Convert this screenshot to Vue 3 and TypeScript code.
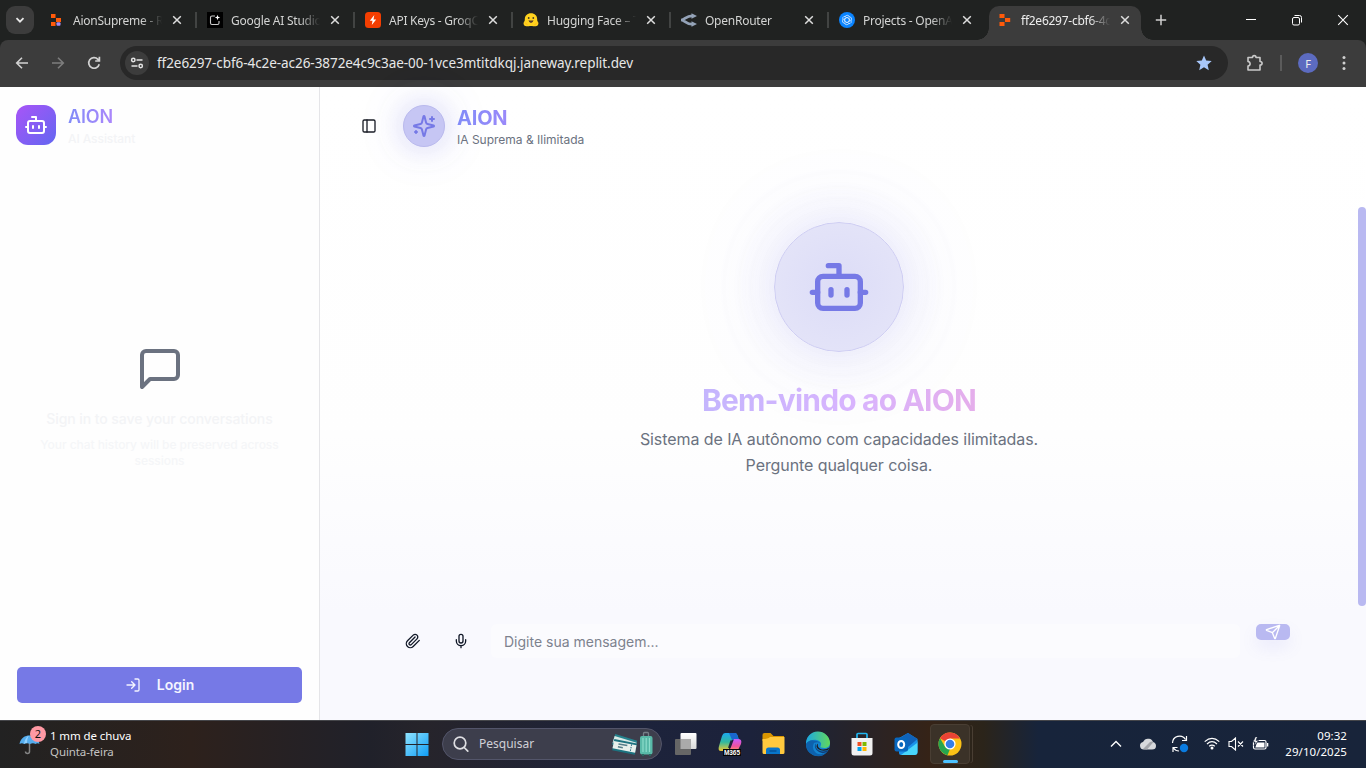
<script setup lang="ts">
interface Tab {
  title: string
  icon: string
  active?: boolean
}

const tabs: Tab[] = [
  { title: 'AionSupreme - R', icon: 'replit-dev' },
  { title: 'Google AI Studio', icon: 'studio' },
  { title: 'API Keys - GroqC', icon: 'groq' },
  { title: 'Hugging Face – T', icon: 'hugging' },
  { title: 'OpenRouter', icon: 'router' },
  { title: 'Projects - OpenA', icon: 'openai' },
  { title: 'ff2e6297-cbf6-4c', icon: 'replit', active: true },
]
const petals: number[] = [0, 60, 120, 180, 240, 300]
</script>

<template>
  <div class="screen">
    <header class="tabstrip">
      <button class="tab-search"><svg width="10" height="10" viewBox="0 0 10 10"><path d="M1.5 3.2 5 6.7l3.500-3.500" fill="none" stroke="#e8e8e8" stroke-width="1.8" /></svg></button>
      <nav class="tabs">
        <div v-for="(tab, i) in tabs" :key="tab.title" class="tab" :class="{ active: tab.active, divided: i > 0 && !tab.active }">
          <svg class="favicon" width="16" height="16" viewBox="0 0 16 16">
            <g v-if="tab.icon === 'replit-dev'">
              <path fill="#ff5a0a" d="M2 2h4.500v4H2zM7 6h5v4H7zM2 10h4.500v4H2z" />
              <rect x="7.500" y="10.200" width="4" height="3.600" rx="1" fill="#a08cf5" />
            </g>
            <g v-else-if="tab.icon === 'studio'">
              <rect width="16" height="16" fill="#000" />
              <path d="M8 4H5Q3.500 4 3.500 5.500V11Q3.500 12.500 5 12.500H10.500Q12 12.500 12 11V9" fill="none" stroke="#ccc" stroke-width="1.1" />
              <path d="M10.500 2.800 11.200 4.800 13.200 5.500 11.200 6.200 10.500 8.200 9.800 6.200 7.800 5.500 9.800 4.800Z" fill="#fff" />
            </g>
            <g v-else-if="tab.icon === 'groq'">
              <rect width="16" height="16" rx="3.500" fill="#f43e01" />
              <path d="M9.300 3 4.800 8.700H7.500L6.800 13 11.200 7.400H8.500Z" fill="#fff" />
            </g>
            <g v-else-if="tab.icon === 'hugging'">
              <path d="M8 1.200c3.700 0 6.200 2.500 6.200 6 0 1.200.1 1.800.8 2.800 1 1.400.3 4-2.300 4.300-1.500.2-2.700-.3-4.700-.3s-3.200.5-4.700.3C.7 14 0 11.400 1 10c.7-1 .8-1.600.8-2.800 0-3.500 2.500-6 6.200-6z" fill="#ffd21e" />
              <path d="M2 10.500 4.500 13M14 10.500 11.500 13" stroke="#ffb01e" stroke-width="1" fill="none" />
              <circle cx="5.700" cy="6" r=".9" fill="#463b2a" /><circle cx="10.300" cy="6" r=".9" fill="#463b2a" />
              <path d="M5.500 8.200Q8 9 10.500 8.200 10 11 8 11T5.500 8.200Z" fill="#5b3b2c" />
            </g>
            <g v-else-if="tab.icon === 'router'">
              <path d="M0 8C4 8 5 3.800 11 3.800M0 8C4 8 5 12.200 11 12.200" fill="none" stroke="#94a3b8" stroke-width="2.700" />
              <path d="M10.500 1.200 16 4 10.500 6.800ZM10.500 9.200 16 12 10.500 14.800Z" fill="#94a3b8" />
            </g>
            <g v-else-if="tab.icon === 'openai'">
              <circle cx="8" cy="8" r="8" fill="#0a84ff" />
              <g fill="none" stroke="#d4eaff" stroke-width=".75">
                <path v-for="a in petals" :key="a" d="M8 5.400 10.300 6.700V9.500M5.800 4.600 8 3.200Q10 3 10.300 5.200" :transform="`rotate(${a} 8 8)`" />
              </g>
            </g>
            <path v-else fill="#ff5a0a" d="M2.500 2h5v4h-5zM8 6h5.200v4H8zM2.500 10h5v4h-5z" />
          </svg>
          <span class="tab-title">{{ tab.title }}</span>
          <svg class="tab-close" width="10" height="10" viewBox="0 0 10 10"><path d="m1.200 1.200 7.600 7.600m0-7.600L1.200 8.800" stroke="#dedede" stroke-width="1.500" /></svg>
        </div>
      </nav>
      <svg class="new-tab" width="12" height="12" viewBox="0 0 12 12"><path d="M6 .8v10.400M.8 6h10.400" stroke="#d0d0d0" stroke-width="1.500" /></svg>
      <div class="window-controls">
        <svg width="12" height="12" viewBox="0 0 12 12"><path d="M1 5.500h10" stroke="#fff" /></svg>
        <svg width="12" height="12" viewBox="0 0 12 12" fill="none" stroke="#fff"><rect x="1.500" y="3.500" width="7" height="7.500" rx="1.500" /><path d="M3.500 1.500H8.500Q10.500 1.500 10.500 3.500V8.500" /></svg>
        <svg width="12" height="12" viewBox="0 0 12 12"><path d="m1.200 1.200 9.600 9.600m0-9.600-9.600 9.600" stroke="#fff" stroke-width="1.100" /></svg>
      </div>
    </header>

    <div class="toolbar">
      <div class="nav-icons">
        <svg width="16" height="16" viewBox="0 0 16 16" fill="none" stroke="#d2d2d2" stroke-width="1.600"><path d="M14 8H3M8 2.700 2.700 8 8 13.300" /></svg>
        <svg width="16" height="16" viewBox="0 0 16 16" fill="none" stroke="#7d7d7d" stroke-width="1.600"><path d="M2 8h11M8 2.700 13.300 8 8 13.300" /></svg>
        <svg width="16" height="16" viewBox="0 0 16 16" fill="none" stroke="#d2d2d2" stroke-width="1.700"><path d="M13.200 9.200A5.300 5.300 0 1 1 11.900 4.300L13.300 5.900M13.400 1.800V6H9.200" /></svg>
      </div>
      <div class="omnibox">
        <span class="site-info"><svg width="14" height="14" viewBox="0 0 14 14" fill="none" stroke="#e4e4e4" stroke-width="1.500"><circle cx="3.300" cy="4" r="1.700" /><path d="M6.500 4h6M1.500 10h6" /><circle cx="10.700" cy="10" r="1.700" /></svg></span>
        <span class="url">ff2e6297-cbf6-4c2e-ac26-3872e4c9c3ae-00-1vce3mtitdkqj.janeway.replit.dev</span>
        <svg class="star" width="16" height="16" viewBox="0 0 16 16"><path d="M8 .5 10.200 5.500 15.700 6.100 11.600 9.700 12.800 15.200 8 12.300 3.200 15.200 4.400 9.700.3 6.100 5.800 5.500Z" fill="#a8c7fa" /></svg>
      </div>
      <svg class="puzzle" width="18" height="18" viewBox="0 0 18 18"><path d="M2 3.500H6.500C6.500 1 10 1 10 3.500H14V7.500C16.800 7.500 16.800 11 14 11V16H2V12C4.800 11.500 4.800 8 2 7.500Z" fill="none" stroke="#c9c9c9" stroke-width="1.600" stroke-linejoin="round" /></svg>
      <i class="tool-sep"></i>
      <span class="avatar">F</span>
      <svg class="kebab" width="4" height="16" viewBox="0 0 4 16" fill="#d0d0d0"><circle cx="2" cy="2.500" r="1.500" /><circle cx="2" cy="8" r="1.500" /><circle cx="2" cy="13.500" r="1.500" /></svg>
    </div>

    <div class="page">
      <aside class="sidebar">
        <div class="brand">
          <span class="brand-logo">
            <svg class="line" width="24" height="24" viewBox="0 0 24 24"><path d="M12 8V4H8M2 14h2M20 14h2M15 13v2M9 13v2" /><rect width="16" height="12" x="4" y="8" rx="2" /></svg>
          </span>
          <div>
            <div class="brand-name">AION</div>
            <div class="brand-sub">AI Assistant</div>
          </div>
        </div>
        <div class="empty">
          <svg class="line" width="48" height="48" viewBox="0 0 24 24"><path d="M21 15a2 2 0 0 1-2 2H7l-4 4V5a2 2 0 0 1 2-2h14a2 2 0 0 1 2 2z" /></svg>
          <p class="empty-title">Sign in to save your conversations</p>
          <p class="empty-sub">Your chat history will be preserved across sessions</p>
        </div>
        <button class="login">
          <svg class="line" width="16" height="16" viewBox="0 0 24 24"><path d="M15 3h4a2 2 0 0 1 2 2v14a2 2 0 0 1-2 2h-4M10 17l5-5-5-5M15 12H3" /></svg>
          <span>Login</span>
        </button>
      </aside>

      <main class="main">
        <div class="chat-head">
          <svg class="line panel-icon" width="16" height="16" viewBox="0 0 24 24"><rect width="18" height="18" x="3" y="3" rx="2" /><path d="M9 3v18" /></svg>
          <span class="spark">
            <svg class="line" width="24" height="24" viewBox="0 0 24 24"><path d="M9.937 15.500A2 2 0 0 0 8.500 14.063l-6.135-1.582a.5.5 0 0 1 0-.962L8.500 9.936A2 2 0 0 0 9.937 8.500l1.582-6.135a.5.5 0 0 1 .963 0L14.063 8.500A2 2 0 0 0 15.500 9.937l6.135 1.581a.5.5 0 0 1 0 .964L15.500 14.063a2 2 0 0 0-1.437 1.437l-1.582 6.135a.5.5 0 0 1-.963 0zM20 3v4M22 5h-4M4 17v2M5 18H3" /></svg>
          </span>
          <div>
            <div class="chat-name">AION</div>
            <div class="chat-sub">IA Suprema &amp; Ilimitada</div>
          </div>
        </div>
        <section class="hero">
          <span class="orb">
            <svg class="line" width="64" height="64" viewBox="0 0 24 24"><path d="M12 8V4H8M2 14h2M20 14h2M15 13v2M9 13v2" /><rect width="16" height="12" x="4" y="8" rx="2" /></svg>
          </span>
          <h1>Bem-vindo ao AION</h1>
          <p>Sistema de IA autônomo com capacidades ilimitadas.<br />Pergunte qualquer coisa.</p>
        </section>
        <div class="composer">
          <svg class="line" width="16" height="16" viewBox="0 0 24 24"><path d="m21.440 11.050-9.190 9.190a6 6 0 0 1-8.490-8.490l8.570-8.570A4 4 0 1 1 18 8.840l-8.590 8.570a2 2 0 0 1-2.830-2.830l8.490-8.480" /></svg>
          <svg class="line" width="16" height="16" viewBox="0 0 24 24"><path d="M12 2a3 3 0 0 0-3 3v7a3 3 0 0 0 6 0V5a3 3 0 0 0-3-3ZM19 10v2a7 7 0 0 1-14 0v-2M12 19v3" /></svg>
          <div class="field">Digite sua mensagem...</div>
          <button class="send">
            <svg class="line" width="16" height="16" viewBox="0 0 24 24"><path d="M14.536 21.686a.5.5 0 0 0 .937-.024l6.500-19a.496.496 0 0 0-.635-.635l-19 6.500a.5.5 0 0 0-.024.937l7.930 3.180a2 2 0 0 1 1.112 1.110zM21.854 2.147l-10.940 10.939" /></svg>
          </button>
        </div>
        <i class="scroll-thumb"></i>
      </main>
    </div>

    <footer class="taskbar">
      <div class="weather">
        <div class="umbrella">
          <svg width="22" height="22" viewBox="0 0 22 22"><path d="M10.500 10v8.500a2 2 0 0 1-4 0" fill="none" stroke="#858585" stroke-width="1.500" /><path d="M.5 11C1.500 5 6 2.500 10.500 2.500S19.500 5 20.500 11Q18.500 9.300 16.500 11 14 9.300 11 11 8 9.300 5 11 3 9.300.5 11Z" fill="#55adee" /><path d="M5 11Q6 4 10.500 2.500 8 4 8 10.200 6.300 9.800 5 11Z" fill="#92d2ff" /></svg>
          <span class="badge">2</span>
        </div>
        <div class="weather-text"><div>1 mm de chuva</div><div class="muted">Quinta-feira</div></div>
      </div>

      <div class="dock">
        <svg class="win" width="24" height="24" viewBox="0 0 24 24">
          <defs><linearGradient id="win" x1="0" y1="0" x2="1" y2="1"><stop stop-color="#8fe3ff" /><stop offset="1" stop-color="#0f9df5" /></linearGradient></defs>
          <path d="M.5 1h11v11H.5zM12.500 1h11v11h-11zM.5 13h11v11H.5zM12.500 13h11v11h-11z" fill="url(#win)" />
        </svg>
        <div class="search">
          <svg width="18" height="18" viewBox="0 0 18 18" fill="none" stroke="#dedee2" stroke-width="1.700"><circle cx="8" cy="8" r="5.800" /><path d="m12.200 12.500 3.600 3.600" stroke-linecap="round" /></svg>
          <span>Pesquisar</span>
          <svg class="travel" width="42" height="26" viewBox="0 0 42 26">
            <g transform="rotate(17 12 12)"><rect x="1" y="6" width="23" height="11" fill="#25828d" /><rect x="1" y="8" width="23" height="7" fill="#d9e9e6" /></g>
            <g transform="rotate(11 12 16)"><rect x="1" y="10" width="23" height="11.500" fill="#1c7380" /><rect x="1" y="12" width="23" height="7.500" fill="#e7f0ec" /><path d="M6 14h9M6 17h5" stroke="#557e89" stroke-width="1.500" /><path d="M19 12v7" stroke="#2c6f82" stroke-dasharray="1.500 1" /></g>
            <path d="M31.500 7V2.500Q31.500 1.500 32.500 1.500H35.500Q36.500 1.500 36.500 2.500V7" stroke="#777f88" stroke-width="1.300" fill="none" />
            <rect x="28" y="5" width="12.500" height="18.500" rx="2" fill="#59b9a8" /><path d="M31 7v14M34.200 7v14M37.500 7v14" stroke="#8bdccb" stroke-width="1.200" /><path d="M30 24h2m5 0h2" stroke="#28665f" stroke-width="2" />
          </svg>
        </div>
        <svg width="28" height="28" viewBox="0 0 28 28"><defs><linearGradient id="tv" x1="0" y1="0" x2="0" y2="1"><stop stop-color="#fff" /><stop offset="1" stop-color="#d9d9d9" /></linearGradient></defs><rect x="8.500" y="3" width="16" height="16" rx="1" fill="url(#tv)" /><rect x="3" y="9" width="16" height="16" rx="1" fill="#666" /><path d="M8.500 9H19V19H8.500z" fill="#aaa" /></svg>
        <svg width="28" height="28" viewBox="0 0 28 28">
          <defs>
            <linearGradient id="ca" x1="0" y1="0" x2="0" y2="1"><stop stop-color="#1ca8ed" /><stop offset=".5" stop-color="#31b9a0" /><stop offset="1" stop-color="#f4c72d" /></linearGradient>
            <linearGradient id="cb" x1="0" y1="0" x2="0" y2="1"><stop stop-color="#c65cff" /><stop offset=".6" stop-color="#ee519c" /><stop offset="1" stop-color="#ff9862" /></linearGradient>
          </defs>
          <path d="M9 3H19Q21 3 22 7L23 10H16L13 19Q12 21 9 21H5Q1.500 21 3 16L6 6Q7 3 9 3Z" fill="url(#ca)" /><path d="M13 3H19Q21 3 22 7L23 10H16Z" fill="#1967cf" /><path d="M18 9H22Q26.500 9 25 14L23 18Q22 21 19 21H12Q14 20 15 17Z" fill="url(#cb)" /><path d="M15.500 10.500 13 18" stroke="#1d223a" stroke-width="2" />
          <rect x="7" y="19" width="18" height="7" fill="#050505" /><text x="8" y="25" font-size="6.500" font-weight="700" fill="#fff" textLength="16" font-family="Liberation Sans, sans-serif">M365</text>
        </svg>
        <svg width="28" height="28" viewBox="0 0 28 28"><path d="M2.500 5Q2.500 3 4.500 3h6l3 3H24v5H2.500z" fill="#d99500" /><path d="M2.500 9Q8 9 10 7H24.500V22.500Q24.500 24 23 24H4Q2.500 24 2.500 22.500Z" fill="#ffc93e" /><path d="M6 24V20Q6 17.500 8.500 17.500H17.500Q20 17.500 20 20V24Z" fill="#0875ca" /><path d="M9.500 21h7" stroke="#064d92" stroke-width="1.300" /></svg>
        <svg width="28" height="28" viewBox="0 0 28 28">
          <defs><linearGradient id="ed" x1="0" y1="0" x2="1" y2="0"><stop stop-color="#1ba7e5" /><stop offset="1" stop-color="#62d95b" /></linearGradient></defs>
          <circle cx="14" cy="14" r="12" fill="#1284d0" /><path d="M2 14A12 12 0 0 1 26 13C26 17 22 19 17 17.500 15.500 17 17.500 15.500 17 13.500 16 9 6 8 2 14Z" fill="url(#ed)" /><path d="M10 13Q7 19 12 23 17 26 23 22A12 12 0 0 1 2 14Q5 9.500 10 10.500 16 11 16.500 14 15 11 10 13Z" fill="#0d61ad" /><path d="M12 13.500Q10.500 18 15 20.500 20 22.500 24 20L23 22Q17 25 12.500 20 9.500 16 12 13.500Z" fill="#103f7b" /><path d="M14 13.500Q13 17 16.500 19 21 20.500 25.500 17.500L24 20Q18 22 14 19 11 16 14 13.500Z" fill="#201d22" />
        </svg>
        <svg width="28" height="28" viewBox="0 0 28 28"><path d="M9 8V4.500Q9 3.500 10 3.500H18Q19 3.500 19 4.500V8" fill="none" stroke="#20b6f0" stroke-width="1.700" /><path d="M3.500 8H24.500V23Q24.500 25.500 22 25.500H6Q3.500 25.500 3.500 23Z" fill="#f1f1f1" /><path fill="#f25022" d="M9.500 12h4v4h-4z" /><path fill="#7fba00" d="M14.500 12h4v4h-4z" /><path fill="#00a4ef" d="M9.500 17h4v4h-4z" /><path fill="#ffb900" d="M14.500 17h4v4h-4z" /></svg>
        <svg width="28" height="28" viewBox="0 0 28 28"><path d="M7 8 16 3 25.500 9V22Q25.500 25 22.500 25H9Q7 25 7 23Z" fill="#1a91e8" /><path d="M8 8 16 3 25.500 9 16 17Z" fill="#1062b9" /><path d="M25.500 10V22Q25.500 25 22.500 25H9L25 13Z" fill="#48d6fb" /><rect x="2.500" y="7.500" width="13.500" height="14" rx="2" fill="#0867be" /><ellipse cx="9.200" cy="14.500" rx="3" ry="3.500" fill="none" stroke="#fff" stroke-width="2" /></svg>
        <div class="chrome-slot">
          <svg width="24" height="24" viewBox="0 0 24 24"><circle cx="12" cy="12" r="11.500" fill="#fbc116" /><path d="M12 12 2 6.200A11.500 11.500 0 0 1 22 6.500H12Z" fill="#ea4335" /><path d="M2 6.200 7.200 15 12 17 9.500 23.200A11.500 11.500 0 0 1 2 6.200Z" fill="#25a650" /><circle cx="12" cy="12" r="5.600" fill="#fff" /><circle cx="12" cy="12" r="4.300" fill="#347ee8" /></svg>
        </div>
      </div>

      <div class="tray">
        <svg width="12" height="12" viewBox="0 0 12 12"><path d="M1 8.500 6 3.500l5 5" fill="none" stroke="#fff" stroke-width="1.400" /></svg>
        <svg class="cloud" width="16" height="12" viewBox="0 0 16 12"><path d="M4 11.500A3.800 3.800 0 0 1 3 4Q5 0 9 .8 12 1 13 4 16 4.800 16 8 16 11.500 12 11.500Z" fill="#d7d9dc" /><path d="M3 11 10 4Q12 3 13.500 4L7 11.500Z" fill="#a3a5aa" /></svg>
        <svg class="sync" width="18" height="18" viewBox="0 0 18 18"><path d="M1.500 8A7 7 0 0 1 14.500 4.500M15.500 1V5.500H11M2 17v-4.500H6.500M2.500 13Q4.500 16 8 16" fill="none" stroke="#fff" stroke-width="1.200" /><circle cx="13" cy="13" r="4.200" fill="#0a7be0" /></svg>
        <svg class="wifi" width="16" height="13" viewBox="0 0 16 13"><path d="M.7 4.600Q8-2 15.300 4.600M3 7Q8 2.400 13 7M5.200 9.300Q8 6.800 10.800 9.300" fill="none" stroke="#fff" stroke-width="1.200" /><circle cx="8" cy="11" r="1.500" fill="#fff" /></svg>
        <svg class="vol" width="16" height="14" viewBox="0 0 16 14"><path d="M1 4.500H3.500L7.500 1V13L3.500 9.500H1ZM10 4.500l5 5m0-5-5 5" fill="none" stroke="#fff" stroke-width="1.100" /></svg>
        <svg class="bat" width="17" height="14" viewBox="0 0 17 14"><rect x="1.500" y="3.500" width="12.500" height="8.500" rx="1.500" fill="none" stroke="#fff" stroke-width="1.200" /><path d="M5 5.500H12.500V10.500H3.300zM15 6h1.300v3.500H15z" fill="#fff" /><path d="M3.500-.5 1 5H3.200L2 9 6.500 3.500H4L5.500-.5Z" fill="#fff" stroke="#18233a" stroke-width=".7" /></svg>
        <div class="clock"><div>09:32</div><div>29/10/2025</div></div>
      </div>
    </footer>
  </div>
</template>

<style>
html, body { margin: 0; overflow: hidden; }
</style>

<style scoped>
* { box-sizing: border-box; }
svg { display: block; flex: none; }
button { border: 0; padding: 0; font: inherit; }
p, h1 { margin: 0; }
.screen { width: 1366px; height: 768px; display: flex; flex-direction: column; overflow: hidden; background: #202221; font-family: Inter, "Noto Sans", sans-serif; }
.line { fill: none; stroke: currentColor; stroke-width: 2; stroke-linecap: round; stroke-linejoin: round; }

.tabstrip { height: 40px; flex: none; display: flex; align-items: center; background: #202221; font-family: "Noto Sans", "Open Sans", sans-serif; }
.tab-search { width: 28px; height: 28px; margin-left: 6px; border-radius: 9px; background: #3c3c3c; display: grid; place-items: center; }
.tabs { display: flex; margin-left: 6px; align-self: stretch; }
.tab { position: relative; width: 158px; height: 40px; display: flex; align-items: center; padding-left: 9px; color: #d3d4d3; font-size: 12px; }
.tab.divided::before { content: ""; position: absolute; left: -3px; top: 12px; width: 2px; height: 16px; background: #424443; }
.tab-title { width: 90px; margin-left: 8px; padding-top: 1px; white-space: nowrap; overflow: hidden; letter-spacing: -0.250px; line-height: 18px; mask-image: linear-gradient(90deg, #000 76%, transparent 99%); }
.tab-close { margin-left: 9px; }
.tab.active { width: 152px; height: 34px; align-self: flex-end; margin-left: 1px; padding: 0 0 6px 8px; border-radius: 10px 10px 0 0; background: #3c3c3c; color: #eee; }
.tab.active::before, .tab.active::after { content: ""; position: absolute; bottom: 0; width: 12px; height: 12px; }
.tab.active::before { left: -12px; background: radial-gradient(circle at 0 0, transparent 11.500px, #3c3c3c 12px); }
.tab.active::after { right: -12px; background: radial-gradient(circle at 100% 0, transparent 11.500px, #3c3c3c 12px); }
.new-tab { margin-left: 14px; }
.window-controls { margin-left: auto; margin-right: 17px; display: flex; gap: 34px; }

.toolbar { height: 47px; flex: none; display: flex; align-items: center; background: #3c3c3c; border-radius: 8px 8px 0 0; padding: 0 0 1px 14px; font-family: "Noto Sans", "Open Sans", sans-serif; }
.nav-icons { display: flex; gap: 20px; }
.omnibox { width: 1108px; height: 34px; margin-left: 18px; padding: 0 16px 0 5px; display: flex; align-items: center; border-radius: 17px; background: #282828; color: #e7e7e7; font-size: 13px; }
.site-info { width: 24px; height: 24px; border-radius: 50%; background: #3c3c3c; display: grid; place-items: center; }
.url { margin-left: 8px; font-size: 13.500px; letter-spacing: -0.060px; }
.star { margin-left: auto; }
.puzzle { margin-left: 18px; }
.tool-sep { width: 2px; height: 16px; margin-left: 16px; background: #5b5b5b; }
.avatar { width: 20px; height: 20px; margin-left: 16px; border-radius: 50%; background: #5c6bc0; color: #eee; font-size: 11px; display: grid; place-items: center; }
.kebab { margin-left: 24px; }

.page { height: 633px; flex: none; display: flex; background: #fff; }
.sidebar { width: 320px; flex: none; display: flex; flex-direction: column; border-right: 1px solid #e5e5e8; background: #fefefe; }
.brand { display: flex; gap: 12px; padding: 18px 16px 0; }
.brand-logo { width: 40px; height: 40px; border-radius: 12px; color: #fff; background: linear-gradient(135deg, #a855f7, #6366f1); display: grid; place-items: center; }
.brand-name { width: 67px; font-size: 18px; line-height: 24px; font-weight: 600; letter-spacing: -0.150px; color: transparent; background: linear-gradient(90deg, #818cf8, #c084fc); background-clip: text; }
.brand-sub { margin-top: 2px; font-size: 12px; line-height: 16px; font-weight: 500; letter-spacing: -0.080px; color: #f3f4f6; }
.empty { flex: 1; display: flex; flex-direction: column; align-items: center; padding-top: 198px; color: #6b7280; text-align: center; }
.empty-title { margin-top: 16px; font-size: 14px; line-height: 20px; font-weight: 500; letter-spacing: -0.080px; color: #f3f4f6; }
.empty-sub { width: 255px; margin-top: 8px; font-size: 12px; line-height: 16px; font-weight: 500; letter-spacing: -0.050px; color: #f5f6f8; }
.login { height: 36px; margin: 0 17px 17px; padding-bottom: 1px; border-radius: 5px; background: #7679e6; color: #f4f4ff; font-size: 14px; font-weight: 600; display: flex; align-items: center; justify-content: center; gap: 16px; }

.main { position: relative; flex: 1; display: flex; flex-direction: column; background: linear-gradient(#fff 0%, #fefefe 55%, #f9f9fe 83%, #f9f9fe 100%); }
.chat-head { height: 78px; display: flex; align-items: center; padding-left: 41px; }
.panel-icon { color: #1b1e27; }
.spark { width: 42px; height: 42px; margin-left: 26px; margin-right: 12px; border: 1px solid #b9b9ed; border-radius: 50%; background: #c6c6f4; color: #7679e6; display: grid; place-items: center; box-shadow: 0 0 30px rgba(118, 121, 230, .3), 0 0 60px rgba(118, 121, 230, .1); }
.chat-name { width: 127px; font-size: 20px; line-height: 28px; font-weight: 700; letter-spacing: -0.200px; color: transparent; background: linear-gradient(90deg, #818cf8, #c084fc); background-clip: text; }
.chat-sub { font-size: 12px; line-height: 16px; color: #6b7280; }
.hero { width: 1038px; display: flex; flex-direction: column; align-items: center; padding-top: 57px; }
.orb { width: 130px; height: 130px; border: 1px solid #cecdf3; border-radius: 50%; background: radial-gradient(circle, #dcdcf7, #e3e3f8 70%); color: #7679e6; display: grid; place-items: center; box-shadow: 0 0 60px rgba(118, 121, 230, .2), 0 0 110px rgba(118, 121, 230, .08); }
.hero h1 { margin-top: 30px; font-size: 30px; line-height: 36px; font-weight: 700; letter-spacing: -0.830px; color: transparent; background: linear-gradient(90deg, #c4b5fd, #d8b4fe 55%, #e5aeeb); background-clip: text; }
.hero p { margin-top: 8px; font-size: 16px; line-height: 26px; letter-spacing: -0.080px; color: #6b7280; text-align: center; }
.composer { margin-top: auto; margin-bottom: 62px; height: 34px; display: flex; align-items: center; gap: 32px; padding: 0 76px 0 85px; color: #111827; }
.field { flex: 1; height: 34px; margin-left: -10px; padding-left: 13px; border-radius: 6px; background: #fbfbfe; color: #7d828e; font-size: 14px; line-height: 36px; }
.send { width: 34px; height: 16px; margin: 0 0 auto -16px; border-radius: 5px; background: #b9b9f1; color: #fff; display: grid; place-items: center; box-shadow: 0 8px 16px rgba(118, 121, 230, .1); }
.scroll-thumb { position: absolute; right: 0; top: 120px; width: 8px; height: 399px; border-radius: 4px; background: #b9b9f1; }

.taskbar { height: 48px; flex: none; display: flex; align-items: center; padding-bottom: 2px; border-top: 1px solid #45464a; background: linear-gradient(90deg, #222 0, #2d211c 14%, #20212a 27%, #26242b 31%, #1d233b 46%, #1c223b 55%, #202332 60%, #352317 68%, #2b241a 72%, #17243b 76%, #18243a 100%); color: #fff; font-family: "Noto Sans", "Open Sans", sans-serif; font-size: 11.500px; }
.weather { width: 404px; display: flex; align-items: center; padding-left: 19px; }
.umbrella { position: relative; width: 31px; }
.badge { position: absolute; left: 11px; top: -7px; width: 16px; height: 16px; border-radius: 50%; background: #ff99a4; color: #111; text-align: center; font-size: 11px; line-height: 16px; }
.weather-text { line-height: 16px; letter-spacing: -0.100px; }
.muted { color: #c4c3c2; }
.dock { display: flex; align-items: center; gap: 16px; }
.win { margin: 0 -3px 0 1px; }
.search { width: 220px; height: 32px; margin-right: -6px; display: flex; align-items: center; padding: 0 7px 0 9px; border: 1px solid #53556a; border-radius: 16px; background: #3d3e4c; color: #d0d0d7; font-size: 12px; }
.search span { margin-left: 9px; }
.travel { margin-left: auto; }
.chrome-slot { position: relative; width: 40px; height: 40px; margin-left: -6px; display: grid; place-items: center; border: 1px solid #493e33; border-radius: 4px; background: #3b3228; box-shadow: 3px 0 0 -1px #2c241a, 4px 0 0 -1px #493e33; }
.chrome-slot::after { content: ""; position: absolute; bottom: 0; width: 15px; height: 3px; border-radius: 2px; background: #4cc2ff; }
.tray { margin-left: auto; margin-right: 19px; display: flex; align-items: center; }
.cloud { margin-left: 18px; }
.sync { margin-left: 15px; }
.wifi { margin-left: 15px; }
.vol { margin-left: 8px; }
.bat { margin-left: 8px; }
.clock { width: 78px; text-align: right; line-height: 16px; letter-spacing: 0.050px; }
</style>
